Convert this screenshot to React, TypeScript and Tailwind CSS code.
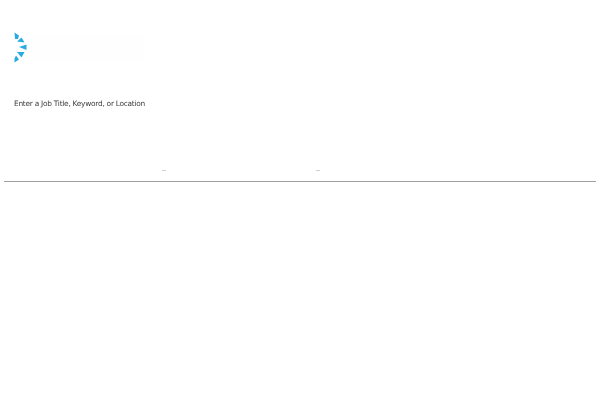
export default function App() {
  return (
    <div className="w-[600px] h-[400px] bg-white overflow-hidden px-1 font-['DejaVu_Sans',sans-serif]">
      <div className="h-[181px] flex flex-col px-2.5">
        {/* Logo mark + washed out wordmark */}
        <div className="pt-8 h-[96px] flex gap-1">
          <svg width="13" height="31" viewBox="0 0 13 31" fill="#29abe2" className="shrink-0">
            <path d="M0.5 0.5 L5 3.5 L4 7 L1 7 Z" />
            <path d="M3 9.5 L7.5 5.5 L10.5 10.5 Z" />
            <path d="M5 15 L12.5 12.5 L12.5 18 Z" />
            <path d="M3 20 L10.5 20 L7.5 25.5 Z" />
            <path d="M0.5 26.5 L2 23.5 L5 27.5 L0.5 30.5 Z" />
          </svg>
          <div className="w-[112px] h-[26px] mt-1 bg-[#fefefe]" />
        </div>
        <p className="text-[7.4px] leading-[16px] tracking-[-0.25px] text-[#3c3c3c] blur-[0.3px]">
          Enter a Job Title, Keyword, or Location
        </p>
        {/* tiny leftovers above the rule */}
        <div className="mt-auto mb-2.5 flex gap-[150px] pl-[148px]">
          <span className="w-1 h-px bg-[#cfcfcf]" />
          <span className="w-1 h-px bg-[#cfcfcf]" />
        </div>
      </div>
      <hr className="border-t border-[#a0a0a0]" />
    </div>
  )
}
